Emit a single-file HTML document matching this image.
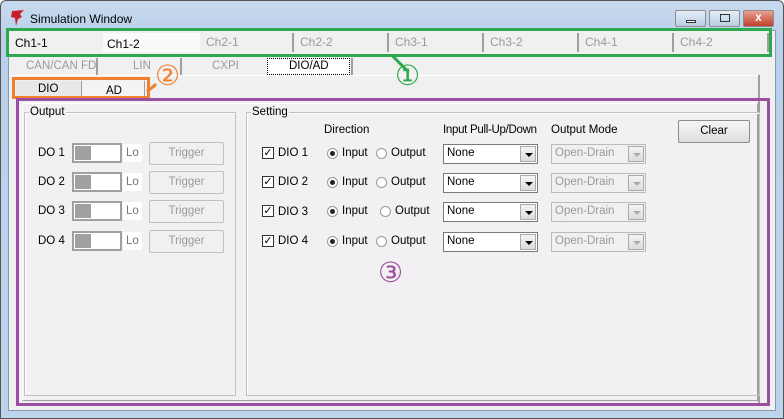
<!DOCTYPE html>
<html><head><style>
*{margin:0;padding:0;box-sizing:border-box}
body{width:784px;height:419px;overflow:hidden;background:#fff;font-family:"Liberation Sans","DejaVu Sans",sans-serif;font-size:11.5px;color:#000;position:relative}
.a{position:absolute}
.win{left:0;top:0;width:784px;height:419px;background:linear-gradient(#c7d9ee,#b9d0ea 40px,#bcd4ec);border:1px solid #555;border-radius:6px 6px 0 0}
.client{left:8px;top:30px;width:768px;height:381px;background:#f0f0f0;border:1px solid #8a9aae}
.t{position:absolute;white-space:nowrap}
.btn{position:absolute;background:linear-gradient(#f6f6f6,#dedede);border:1px solid #8c8c8c;border-radius:2px;text-align:center}
.dis{color:#9a9a9a}
.tog{position:absolute;width:50px;height:20px;background:#fff;border:2px solid #a0a0a0}
.tog:before{content:"";position:absolute;left:1px;top:1px;width:16px;height:14px;background:#a0a0a0}
.cb{position:absolute;width:12px;height:12px;border:1px solid #333;background:#fff;font-size:11px;line-height:10px;text-align:center}
.rd{position:absolute;width:11px;height:11px;border:1px solid #999;border-radius:50%;background:#fff}
.rd.on:after{content:"";position:absolute;left:2px;top:2px;width:5px;height:5px;border-radius:50%;background:#222}
.cmb{position:absolute;width:95px;height:20px;border:1px solid #7a7a7a;background:#fff;padding:2px 3px}
.cmb i{position:absolute;right:1px;top:1px;width:16px;height:16px;background:linear-gradient(#f4f4f4,#dcdcdc);border:1px solid #aaa}
.cmb i:after{content:"";position:absolute;left:4px;top:6px;border-left:4px solid transparent;border-right:4px solid transparent;border-top:4px solid #000}
.cmb.d{background:#f0f0f0;border-color:#bbb;color:#9a9a9a}
.cmb.d i:after{border-top-color:#aaa}
.grp{position:absolute;border:1px solid #c0c0c0;box-shadow:1px 1px 0 #fff inset}
.ctab{position:absolute;top:33px;height:19px;border-right:2px solid #a0a0a0;color:#9a9a9a;padding:2px 0 0 6px;font-size:12px}
.num{position:absolute;font-size:28px;line-height:28px;font-family:"DejaVu Sans",sans-serif}
</style></head><body>
<div class="a win"></div>
<svg class="a" style="left:10px;top:9px" width="16" height="18"><path d="M2 2 L14 1 L10 5 L12 8 L8 10 L6 17 L5 9 L1 8 Z" fill="#c8202a"/></svg>
<div class="t" style="left:30px;top:12px;font-size:12px">Simulation Window</div>
<div class="btn" style="left:675px;top:10px;width:31px;height:17px;background:linear-gradient(#e6eef8,#b8cde4)"><div class="a" style="left:10px;top:9px;width:10px;height:3px;border:1px solid #333;background:#fff"></div></div>
<div class="btn" style="left:709px;top:10px;width:31px;height:17px;background:linear-gradient(#e6eef8,#b8cde4)"><div class="a" style="left:10px;top:3px;width:10px;height:8px;border:1px solid #333"></div></div>
<div class="btn" style="left:743px;top:10px;width:31px;height:17px;background:linear-gradient(#e8a090,#c0402a);color:#fff;font-weight:bold;line-height:14px">x</div>
<div class="a client"></div>
<div class="a" style="left:10px;top:32px;width:758px;height:21px;background:#f0f0f0"></div>
<div class="a" style="left:103px;top:33px;width:97px;height:19px;background:#fafafa"></div>
<div class="t" style="left:15px;top:36px;font-size:12px">Ch1-1</div>
<div class="t" style="left:107px;top:37px;font-size:12px">Ch1-2</div>
<div class="ctab" style="left:200px;width:94px">Ch2-1</div>
<div class="ctab" style="left:294px;width:95px">Ch2-2</div>
<div class="ctab" style="left:389px;width:95px">Ch3-1</div>
<div class="ctab" style="left:484px;width:95px">Ch3-2</div>
<div class="ctab" style="left:579px;width:95px">Ch4-1</div>
<div class="ctab" style="left:674px;width:95px">Ch4-2</div>
<div class="a" style="left:6px;top:28px;width:766px;height:29px;border:3px solid #2ea84e"></div>
<div class="a" style="left:10px;top:75px;width:748px;height:1px;background:#fff"></div>
<div class="a" style="left:758px;top:75px;width:2px;height:330px;background:#a0a0a0"></div>
<div class="t dis" style="left:26px;top:60px">CAN/CAN FD</div>
<div class="a" style="left:96px;top:58px;width:2px;height:17px;background:#a0a0a0"></div>
<div class="t dis" style="left:133px;top:60px">LIN</div>
<div class="a" style="left:180px;top:58px;width:2px;height:17px;background:#a0a0a0"></div>
<div class="t dis" style="left:212px;top:60px">CXPI</div>
<div class="a" style="left:267px;top:58px;width:83px;height:17px;border:1px dotted #000;background:#fff"></div>
<div class="t" style="left:289px;top:60px">DIO/AD</div>
<div class="a" style="left:351px;top:58px;width:2px;height:17px;background:#a0a0a0"></div>
<div class="a" style="left:390px;top:55px;width:3px;height:24px;background:#2ea84e;transform:rotate(-45deg);transform-origin:top"></div>
<div class="num" style="left:395px;top:62px;color:#2ea84e">①</div>
<div class="a" style="left:16px;top:81px;width:66px;height:17px;background:#e8e8e8;border-right:1px solid #a0a0a0"></div>
<div class="t" style="left:38px;top:83px">DIO</div>
<div class="a" style="left:83px;top:81px;width:62px;height:17px;background:#f4f4f4;border-right:1px solid #a0a0a0"></div>
<div class="t" style="left:106px;top:85px">AD</div>
<div class="a" style="left:12px;top:77px;width:138px;height:22px;border:3px solid #f08030"></div>
<div class="a" style="left:150px;top:82px;width:3px;height:12px;background:#f08030;transform:rotate(50deg)"></div>
<div class="num" style="left:155px;top:62px;color:#f08030">②</div>
<div class="a" style="left:16px;top:98px;width:754px;height:308px;border:3px solid #9b4fa0"></div>
<div class="a" style="left:19px;top:101px;width:739px;height:302px;background:#f2f0f2"></div>
<div class="a" style="left:22px;top:103px;width:736px;height:298px;border:1px solid #fff;border-right-color:#a0a0a0;border-bottom-color:#a0a0a0"></div>
<div class="grp" style="left:24px;top:112px;width:212px;height:284px"></div>
<div class="t" style="left:29px;top:106px;background:#f2f0f2;padding:0 1px">Output</div>
<div class="t" style="left:38px;top:147px">DO 1</div>
<div class="tog" style="left:72px;top:143px"></div><div class="t" style="left:123px;top:144px;background:#fff;padding:3px 3px;color:#777">Lo</div>
<div class="btn dis" style="left:149px;top:142px;width:75px;height:23px;line-height:21px;background:#f0f0f0;border-color:#c0c0c0">Trigger</div>
<div class="t" style="left:38px;top:176px">DO 2</div>
<div class="tog" style="left:72px;top:172px"></div><div class="t" style="left:123px;top:173px;background:#fff;padding:3px 3px;color:#777">Lo</div>
<div class="btn dis" style="left:149px;top:171px;width:75px;height:23px;line-height:21px;background:#f0f0f0;border-color:#c0c0c0">Trigger</div>
<div class="t" style="left:38px;top:205px">DO 3</div>
<div class="tog" style="left:72px;top:201px"></div><div class="t" style="left:123px;top:202px;background:#fff;padding:3px 3px;color:#777">Lo</div>
<div class="btn dis" style="left:149px;top:200px;width:75px;height:23px;line-height:21px;background:#f0f0f0;border-color:#c0c0c0">Trigger</div>
<div class="t" style="left:38px;top:235px">DO 4</div>
<div class="tog" style="left:72px;top:231px"></div><div class="t" style="left:123px;top:232px;background:#fff;padding:3px 3px;color:#777">Lo</div>
<div class="btn dis" style="left:149px;top:230px;width:75px;height:23px;line-height:21px;background:#f0f0f0;border-color:#c0c0c0">Trigger</div>
<div class="grp" style="left:246px;top:112px;width:514px;height:284px"></div>
<div class="t" style="left:251px;top:106px;background:#f2f0f2;padding:0 1px">Setting</div>
<div class="t" style="left:324px;top:124px">Direction</div>
<div class="t" style="left:443px;top:124px;letter-spacing:-0.3px">Input Pull-Up/Down</div>
<div class="t" style="left:551px;top:124px">Output Mode</div>
<div class="btn" style="left:678px;top:120px;width:72px;height:23px;line-height:21px">Clear</div>
<div class="cb" style="left:262px;top:147px">✓</div><div class="t" style="left:278px;top:147px">DIO 1</div>
<div class="rd on" style="left:327px;top:148px"></div><div class="t" style="left:342px;top:147px">Input</div>
<div class="rd" style="left:376px;top:148px"></div><div class="t" style="left:391px;top:147px">Output</div>
<div class="cmb" style="left:443px;top:144px">None<i></i></div>
<div class="cmb d" style="left:551px;top:144px">Open-Drain<i></i></div>
<div class="cb" style="left:262px;top:176px">✓</div><div class="t" style="left:278px;top:176px">DIO 2</div>
<div class="rd on" style="left:327px;top:177px"></div><div class="t" style="left:342px;top:176px">Input</div>
<div class="rd" style="left:376px;top:177px"></div><div class="t" style="left:391px;top:176px">Output</div>
<div class="cmb" style="left:443px;top:173px">None<i></i></div>
<div class="cmb d" style="left:551px;top:173px">Open-Drain<i></i></div>
<div class="cb" style="left:262px;top:205px">✓</div><div class="t" style="left:278px;top:206px">DIO 3</div>
<div class="rd on" style="left:327px;top:206px"></div><div class="t" style="left:342px;top:205px">Input</div>
<div class="rd" style="left:380px;top:206px"></div><div class="t" style="left:395px;top:205px">Output</div>
<div class="cmb" style="left:443px;top:202px">None<i></i></div>
<div class="cmb d" style="left:551px;top:202px">Open-Drain<i></i></div>
<div class="cb" style="left:262px;top:235px">✓</div><div class="t" style="left:278px;top:235px">DIO 4</div>
<div class="rd on" style="left:327px;top:236px"></div><div class="t" style="left:342px;top:235px">Input</div>
<div class="rd" style="left:376px;top:236px"></div><div class="t" style="left:391px;top:235px">Output</div>
<div class="cmb" style="left:443px;top:232px">None<i></i></div>
<div class="cmb d" style="left:551px;top:232px">Open-Drain<i></i></div>
<div class="num" style="left:378px;top:259px;color:#9b4fa0">③</div>
</body></html>
